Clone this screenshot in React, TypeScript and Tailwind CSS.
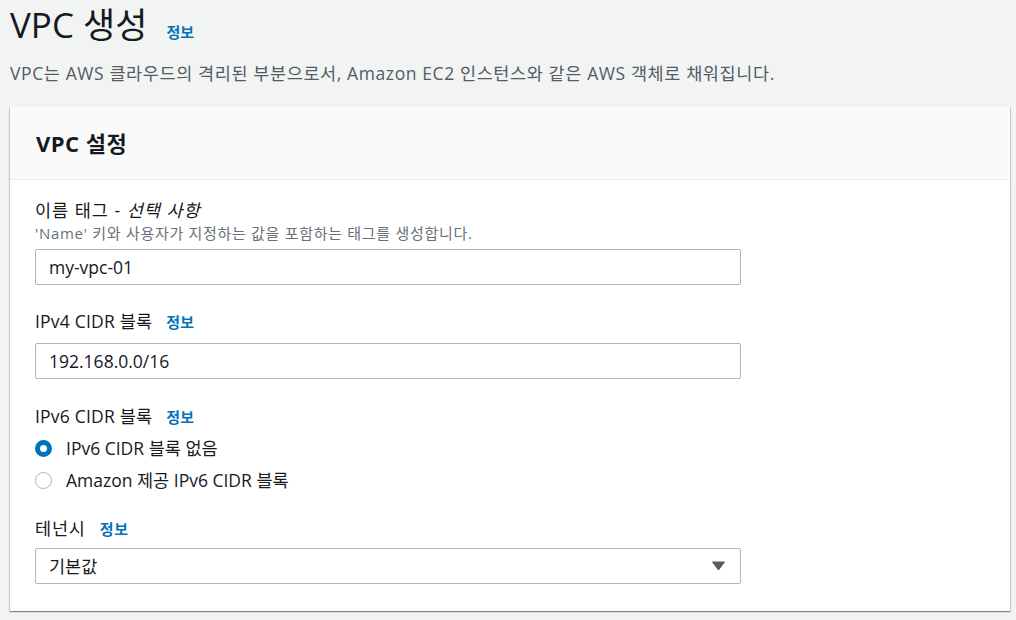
export default function App() {
  const font = { fontFamily: '"Open Sans", "Noto Sans CJK KR", sans-serif' };

  const Info = ({ gap = 'ml-[14px]' }: { gap?: string }) => (
    <a className={`${gap} text-[15px] font-semibold text-[#0073bb]`}>정보</a>
  );

  return (
    <div className="min-h-[620px] w-[1016px] bg-[#f2f3f3] text-[#16191f]" style={font}>
      <div className="px-[10px] pt-[2px]">
        {/* 헤더 */}
        <div className="flex items-baseline">
          <h1 className="text-[35px] leading-[46px] font-normal">VPC 생성</h1>
          <Info gap="ml-[19px]" />
        </div>
        <p className="mt-[13px] text-[17.5px] leading-[24px] tracking-[0.6px] text-[#545b64]">
          VPC는 AWS 클라우드의 격리된 부분으로서, Amazon EC2 인스턴스와 같은 AWS 객체로 채워집니다.
        </p>

        {/* 카드 */}
        <div className="mt-[22px] w-[1000px] bg-white shadow-[0_1px_1px_0_rgba(0,28,36,0.3),1px_1px_1px_0_rgba(0,28,36,0.15),-1px_1px_1px_0_rgba(0,28,36,0.15)]">
          <div className="flex h-[73px] items-center border-b border-[#eaeded] bg-[#fafafa] px-[26px]">
            <h2 className="text-[22px] font-bold tracking-[0.5px]">VPC 설정</h2>
          </div>

          <div className="px-[25px] pt-[18px] pb-[27px]">
            {/* 이름 태그 */}
            <div>
              <div className="text-[17.5px] leading-[25px] tracking-[1px]">
                이름 태그 - <i>선택 사항</i>
              </div>
              <div className="text-[15px] leading-[20px] tracking-[0.7px] text-[#687078]">
                'Name' 키와 사용자가 지정하는 값을 포함하는 태그를 생성합니다.
              </div>
              <div className="mt-[6px] flex h-[36px] w-[706px] items-center rounded-[2px] border border-[#aab7b8] px-[13px] text-[17.5px]">
                my-vpc-01
              </div>
            </div>

            {/* IPv4 */}
            <div className="mt-[24px]">
              <div className="flex items-baseline text-[17.5px] leading-[24px] tracking-[0.2px]">
                IPv4 CIDR 블록
                <Info />
              </div>
              <div className="mt-[9px] flex h-[36px] w-[706px] items-center rounded-[2px] border border-[#aab7b8] px-[13px] text-[17.5px]">
                192.168.0.0/16
              </div>
            </div>

            {/* IPv6 */}
            <div className="mt-[25px]">
              <div className="flex items-baseline text-[17.5px] leading-[24px] tracking-[0.2px]">
                IPv6 CIDR 블록
                <Info />
              </div>
              <div className="mt-[7px] flex flex-col gap-[8px]">
                <label className="flex h-[24px] items-center text-[17.5px]">
                  <span className="mr-[14px] box-border h-[17px] w-[17px] rounded-full border-[5px] border-[#0073bb] bg-white" />
                  IPv6 CIDR 블록 없음
                </label>
                <label className="flex h-[24px] items-center text-[17.5px]">
                  <span className="mr-[14px] box-border h-[17px] w-[17px] rounded-full border-[1.5px] border-[#aab7b8] bg-white" />
                  Amazon 제공 IPv6 CIDR 블록
                </label>
              </div>
            </div>

            {/* 테넌시 */}
            <div className="mt-[24px]">
              <div className="flex items-baseline text-[17.5px] leading-[24px] tracking-[0.8px]">
                테넌시
                <Info />
              </div>
              <div className="mt-[7px] flex h-[36px] w-[706px] items-center justify-between rounded-[2px] border border-[#aab7b8] pl-[13px] pr-[15px] text-[17.5px]">
                <span>기본값</span>
                <svg width="13" height="10" viewBox="0 0 13 10">
                  <path d="M0.5 1 L12.5 1 L6.5 9 Z" fill="#545b64" stroke="#545b64" strokeLinejoin="round" />
                </svg>
              </div>
            </div>
          </div>
        </div>
      </div>
    </div>
  );
}
